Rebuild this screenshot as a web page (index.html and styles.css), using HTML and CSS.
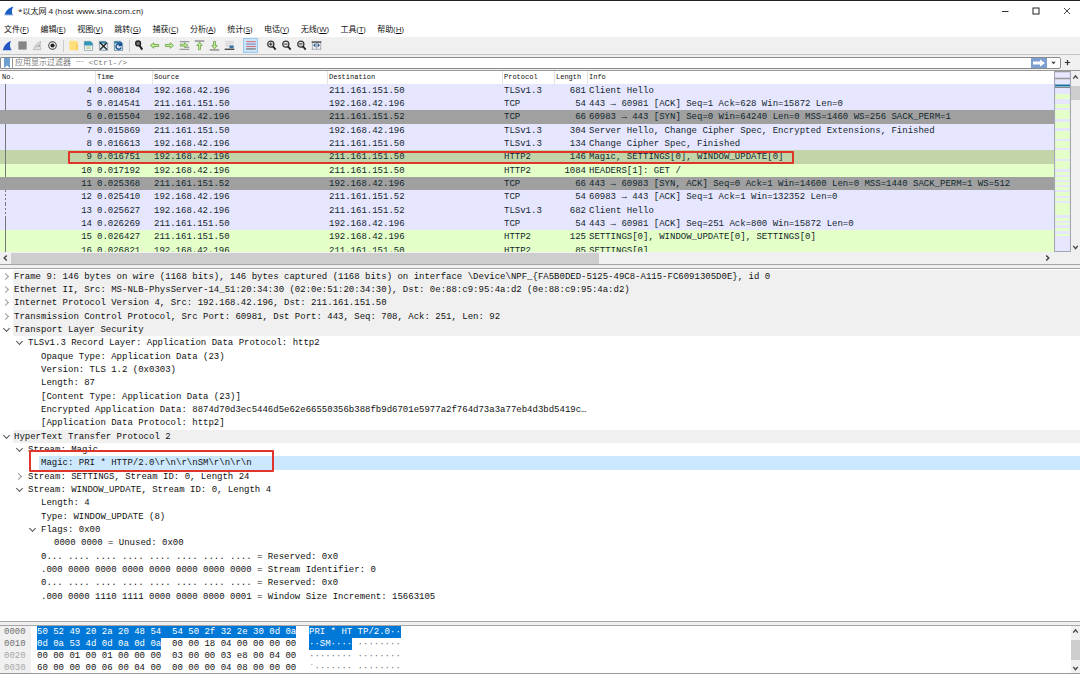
FILE: index.html
```html
<!DOCTYPE html>
<html lang="zh-CN">
<head>
<meta charset="utf-8">
<title>*以太网 4 (host www.sina.com.cn)</title>
<link rel="stylesheet" href="styles.css">
</head>
<body>
<header class="titlebar">
  <svg class="app-icon" viewBox="0 0 16 16"><path d="M1 14C3 7 8 2 15 1c-3 4-3 9-1 13z" fill="#1c5fc4"/><path d="M1 15h14v-1H1z" fill="#7fa6dd"/></svg>
  <h1 class="title">*以太网 4 (host www.sina.com.cn)</h1>
  <div class="window-buttons">
    <button class="win-btn" aria-label="最小化"><svg viewBox="0 0 8 8"><path d="M1 4.500h6.500" stroke="#333" fill="none"/></svg></button>
    <button class="win-btn" aria-label="最大化"><svg viewBox="0 0 8 8"><rect x="1" y="1" width="6" height="6" stroke="#222" fill="none"/></svg></button>
    <button class="win-btn" aria-label="关闭"><svg viewBox="0 0 8 8"><path d="M1 1l6 6M7 1L1 7" stroke="#333" stroke-width=".9" fill="none"/></svg></button>
  </div>
</header>
<nav class="menubar">
  <button>文件(<u>F</u>)</button><button>编辑(<u>E</u>)</button><button>视图(<u>V</u>)</button><button>跳转(<u>G</u>)</button><button>捕获(<u>C</u>)</button><button>分析(<u>A</u>)</button><button>统计(<u>S</u>)</button><button>电话(<u>Y</u>)</button><button>无线(<u>W</u>)</button><button>工具(<u>T</u>)</button><button>帮助(<u>H</u>)</button>
</nav>
<div class="toolbar">
  <button aria-label="开始捕获"><svg viewBox="0 0 16 16"><path d="M1 15C3 8 7 3 13 1c-2 5-2 9 1 14z" fill="#2257c5"/></svg></button>
  <button aria-label="停止捕获"><svg viewBox="0 0 16 16"><rect x="2" y="2" width="12" height="12" fill="#858585"/></svg></button>
  <button aria-label="重新开始"><svg viewBox="0 0 16 16"><path d="M2 14C4 8 7 4 13 2c-2 4-1 8 0 12z" fill="#e0e0e0" stroke="#aaa"/><path d="M6 11a3 3 0 0 1 5-2M11 6v3H8" stroke="#999" fill="none"/></svg></button>
  <button aria-label="捕获选项"><svg viewBox="0 0 16 16"><circle cx="8" cy="8" r="5.500" fill="none" stroke="#444" stroke-width="1.500"/><circle cx="8" cy="8" r="3" fill="#222"/></svg></button>
  <span class="sep"></span>
  <button aria-label="打开"><svg viewBox="0 0 16 16"><path d="M2 1h10l2 2v12H2z" fill="#ffdf7c"/><path d="M12 8v7h2V3z" fill="#f3c74f"/></svg></button>
  <button aria-label="保存"><svg viewBox="0 0 16 16"><path d="M2 2h9l3 3v10H2z" fill="#fff" stroke="#718697"/><path d="M2 2h9l3 3v3H2z" fill="#2f93b5"/><path d="M4 10h8M4 12h8" stroke="#8bac5c"/></svg></button>
  <button aria-label="关闭文件"><svg viewBox="0 0 16 16"><path d="M2 2h9l3 3v10H2z" fill="#dce8ef" stroke="#718697"/><path d="M2 2h9l3 3H2z" fill="#2f7fa5"/><path d="M3 4l10 10M13 4L3 14" stroke="#222" stroke-width="2"/></svg></button>
  <button aria-label="重新加载"><svg viewBox="0 0 16 16"><path d="M2 2h9l3 3v10H2z" fill="#dce8ef" stroke="#416b8b"/><path d="M2 2h9l3 3H2z" fill="#2f7fa5"/><path d="M11.500 7A4 4 0 1 0 12 11M12 4v4H8" stroke="#164f8e" stroke-width="2" fill="none"/></svg></button>
  <span class="sep"></span>
  <button aria-label="查找"><svg viewBox="0 0 16 16"><circle cx="6" cy="5" r="3.500" fill="#777" stroke="#222" stroke-width="2"/><path d="M8 8l4 6" stroke="#222" stroke-width="3"/></svg></button>
  <button aria-label="后退"><svg viewBox="0 0 16 16"><path d="M2 8l5-4v2.500h7v3H7V12z" fill="#c8f0a5" stroke="#6fa447" stroke-width="1.300"/></svg></button>
  <button aria-label="前进"><svg viewBox="0 0 16 16"><path d="M14 8L9 4v2.500H2v3h7V12z" fill="#c8f0a5" stroke="#6fa447" stroke-width="1.300"/></svg></button>
  <button aria-label="转到分组"><svg viewBox="0 0 16 16"><path d="M1 2.500h14M1 13.500h14M9 10.500h6" stroke="#555"/><path d="M2 6h6V4l5 3.500L8 11V9H2z" fill="#b9e895" stroke="#62983d"/></svg></button>
  <button aria-label="首个分组"><svg viewBox="0 0 16 16"><path d="M1 1.500h14" stroke="#666" stroke-width="1.500"/><path d="M8 3l4 5H9.500v6h-3V8H4z" fill="#b9e895" stroke="#62983d"/></svg></button>
  <button aria-label="最后分组"><svg viewBox="0 0 16 16"><path d="M1 14.500h14" stroke="#666" stroke-width="1.500"/><path d="M8 13L4 8h2.500V2h3v6H12z" fill="#b9e895" stroke="#62983d"/></svg></button>
  <button aria-label="自动滚动"><svg viewBox="0 0 16 16"><path d="M2 2.500h12M2 5.500h12M2 8.500h12" stroke="#bbb"/><path d="M1 13.500h14" stroke="#444" stroke-width="2"/><path d="M8 8h6v4H8z" fill="#3973a8"/></svg></button>
  <span class="sep plain"></span>
  <button class="active" aria-label="着色"><svg viewBox="0 0 16 16"><path d="M1 2.500h14" stroke="#d76565" stroke-width="1.400"/><path d="M1 6h14" stroke="#7676ac" stroke-width="1.400"/><path d="M1 9.500h14" stroke="#d76565" stroke-width="1.400"/><path d="M1 13h14" stroke="#555" stroke-width="1.400"/></svg></button>
  <span class="sep plain"></span>
  <button aria-label="放大"><svg viewBox="0 0 16 16"><circle cx="7" cy="6" r="4.500" fill="#eee" stroke="#333" stroke-width="1.800"/><path d="M10 9l4 5" stroke="#222" stroke-width="2.600"/><path d="M4.500 6h5M7 3.500v5" stroke="#222" stroke-width="1.400"/></svg></button>
  <button aria-label="缩小"><svg viewBox="0 0 16 16"><circle cx="7" cy="6" r="4.500" fill="#eee" stroke="#333" stroke-width="1.800"/><path d="M10 9l4 5" stroke="#222" stroke-width="2.600"/><path d="M4.500 6h5" stroke="#222" stroke-width="1.400"/></svg></button>
  <button aria-label="正常大小"><svg viewBox="0 0 16 16"><circle cx="7" cy="6" r="4.500" fill="#eee" stroke="#333" stroke-width="1.800"/><path d="M10 9l4 5" stroke="#222" stroke-width="2.600"/><path d="M4.500 5h5M4.500 7h5" stroke="#333"/></svg></button>
  <button aria-label="调整列宽"><svg viewBox="0 0 16 16"><path d="M1 13.500h14M8 2v12M2 2v12M14 2v12" stroke="#8c98a3"/><path d="M1 2h14v2H1z" fill="#444"/><path d="M6.500 4v7L3 7.500zM9.500 4v7L13 7.500z" fill="#315f96"/></svg></button>
</div>
<form class="filterbar">
  <div class="filterbox">
    <button type="button" class="bookmark" aria-label="书签"><svg viewBox="0 0 8 10"><path d="M1 0h6v10L4 7.500 1 10z" fill="#6f9fd0"/></svg></button>
    <input type="text" aria-label="应用显示过滤器" placeholder="应用显示过滤器 ⋯ &lt;Ctrl-/&gt;">
    <button type="button" class="apply" aria-label="应用"><svg viewBox="0 0 16 10"><path d="M2 3.500h7V1.500L14 5 9 8.500v-2H2z" fill="#fff"/></svg></button>
    <button type="button" class="drop" aria-label="历史"><svg viewBox="0 0 8 8"><path d="M1.500 3h5L4 6z" fill="#444"/></svg></button>
  </div>
  <button type="button" class="add" aria-label="添加"><svg viewBox="0 0 8 8"><path d="M1 4h6M4 1v6" stroke="#333" stroke-width="1.400"/></svg></button>
</form>
<main class="panes">
<section class="packets">
  <div class="list">
    <table>
      <colgroup><col class="c-no"><col class="c-time"><col class="c-addr"><col class="c-addr"><col class="c-proto"><col class="c-len"><col></colgroup>
      <thead><tr><th>No.</th><th>Time</th><th>Source</th><th>Destination</th><th>Protocol</th><th>Length</th><th>Info</th></tr></thead>
      <tbody>
      <tr class="tcp"><td>4</td><td>0.008184</td><td>192.168.42.196</td><td>211.161.151.50</td><td>TLSv1.3</td><td>681</td><td>Client Hello</td></tr>
      <tr class="tcp"><td>5</td><td>0.014541</td><td>211.161.151.50</td><td>192.168.42.196</td><td>TCP</td><td>54</td><td>443 → 60981 [ACK] Seq=1 Ack=628 Win=15872 Len=0</td></tr>
      <tr class="syn"><td>6</td><td>0.015504</td><td>192.168.42.196</td><td>211.161.151.52</td><td>TCP</td><td>66</td><td>60983 → 443 [SYN] Seq=0 Win=64240 Len=0 MSS=1460 WS=256 SACK_PERM=1</td></tr>
      <tr class="tcp"><td>7</td><td>0.015869</td><td>211.161.151.50</td><td>192.168.42.196</td><td>TLSv1.3</td><td>304</td><td>Server Hello, Change Cipher Spec, Encrypted Extensions, Finished</td></tr>
      <tr class="tcp"><td>8</td><td>0.016613</td><td>192.168.42.196</td><td>211.161.151.50</td><td>TLSv1.3</td><td>134</td><td>Change Cipher Spec, Finished</td></tr>
      <tr class="http current"><td>9</td><td>0.016751</td><td>192.168.42.196</td><td>211.161.151.50</td><td>HTTP2</td><td>146</td><td>Magic, SETTINGS[0], WINDOW_UPDATE[0]</td></tr>
      <tr class="http"><td>10</td><td>0.017192</td><td>192.168.42.196</td><td>211.161.151.50</td><td>HTTP2</td><td>1084</td><td>HEADERS[1]: GET /</td></tr>
      <tr class="syn"><td>11</td><td>0.025368</td><td>211.161.151.52</td><td>192.168.42.196</td><td>TCP</td><td>66</td><td>443 → 60983 [SYN, ACK] Seq=0 Ack=1 Win=14600 Len=0 MSS=1440 SACK_PERM=1 WS=512</td></tr>
      <tr class="tcp other"><td>12</td><td>0.025410</td><td>192.168.42.196</td><td>211.161.151.52</td><td>TCP</td><td>54</td><td>60983 → 443 [ACK] Seq=1 Ack=1 Win=132352 Len=0</td></tr>
      <tr class="tcp other"><td>13</td><td>0.025627</td><td>192.168.42.196</td><td>211.161.151.52</td><td>TLSv1.3</td><td>682</td><td>Client Hello</td></tr>
      <tr class="tcp"><td>14</td><td>0.026269</td><td>211.161.151.50</td><td>192.168.42.196</td><td>TCP</td><td>54</td><td>443 → 60981 [ACK] Seq=251 Ack=800 Win=15872 Len=0</td></tr>
      <tr class="http"><td>15</td><td>0.026427</td><td>211.161.151.50</td><td>192.168.42.196</td><td>HTTP2</td><td>125</td><td>SETTINGS[0], WINDOW_UPDATE[0], SETTINGS[0]</td></tr>
      <tr class="http"><td>16</td><td>0.026821</td><td>192.168.42.196</td><td>211.161.151.50</td><td>HTTP2</td><td>85</td><td>SETTINGS[0]</td></tr>
      </tbody>
    </table>
  </div>
  <svg class="minimap" viewBox="0 0 16 181" preserveAspectRatio="none">
    <rect width="16" height="181" fill="#e7e6ff"/>
    <path d="M0 .5h16M0 7.500h16" stroke="#999" stroke-width="1.300"/>
    <path d="M0 14.500h16" stroke="#16779c" stroke-width="2"/><path d="M0 16.500h16" stroke="#888"/>
    <path d="M0 23h16v5H0zM0 33h16v4H0zM0 39h16v9H0zM0 51h16v6H0zM0 60h16v8H0zM0 70h16v7H0zM0 79h16v9H0zM0 90h16v8H0zM0 101h16v3H0zM0 106h16v3H0zM0 111h16v3H0zM0 116h16v3H0zM0 121h16v4H0zM0 127h16v3H0zM0 132h16v12H0zM0 147h16v3H0zM0 152h16v2H0zM0 157h16v3H0zM0 163h16v2H0z" fill="#e4ffc7"/>
    <path d="M.5 0v181M15.500 0v181M0 180.500h16" stroke="#a5a5b5" fill="none"/>
  </svg>
  <div class="vscroll"><svg viewBox="0 0 8 8"><path d="M2 5.500l2-2.500 2 2.500" class="arrow"/></svg><span class="thumb"></span><svg viewBox="0 0 8 8"><path d="M2 3l2 2.500L6 3" class="arrow"/></svg></div>
  <div class="mark mark-packet"></div>
</section>
<div class="hscroll"><svg viewBox="0 0 8 8"><path d="M5 2L3 4l2 2" class="arrow"/></svg><div class="track"><span class="thumb"></span></div><svg viewBox="0 0 8 8"><path d="M3 2l2 2-2 2" class="arrow"/></svg></div>
<div class="splitter"></div>
<section class="details">
  <ul class="tree">
    <li class="l0 closed">Frame 9: 146 bytes on wire (1168 bits), 146 bytes captured (1168 bits) on interface \Device\NPF_{FA5B0DED-5125-49C8-A115-FC6091305D0E}, id 0</li>
    <li class="l0 closed">Ethernet II, Src: MS-NLB-PhysServer-14_51:20:34:30 (02:0e:51:20:34:30), Dst: 0e:88:c9:95:4a:d2 (0e:88:c9:95:4a:d2)</li>
    <li class="l0 closed">Internet Protocol Version 4, Src: 192.168.42.196, Dst: 211.161.151.50</li>
    <li class="l0 closed">Transmission Control Protocol, Src Port: 60981, Dst Port: 443, Seq: 708, Ack: 251, Len: 92</li>
    <li class="l0 open">Transport Layer Security</li>
    <li class="l1 open">TLSv1.3 Record Layer: Application Data Protocol: http2</li>
    <li class="l2">Opaque Type: Application Data (23)</li>
    <li class="l2">Version: TLS 1.2 (0x0303)</li>
    <li class="l2">Length: 87</li>
    <li class="l2">[Content Type: Application Data (23)]</li>
    <li class="l2">Encrypted Application Data: 8874d70d3ec5446d5e62e66550356b388fb9d6701e5977a2f764d73a3a77eb4d3bd5419c…</li>
    <li class="l2">[Application Data Protocol: http2]</li>
    <li class="l0 open">HyperText Transfer Protocol 2</li>
    <li class="l1 open">Stream: Magic</li>
    <li class="l2 picked">Magic: PRI * HTTP/2.0\r\n\r\nSM\r\n\r\n</li>
    <li class="l1 closed">Stream: SETTINGS, Stream ID: 0, Length 24</li>
    <li class="l1 open">Stream: WINDOW_UPDATE, Stream ID: 0, Length 4</li>
    <li class="l2">Length: 4</li>
    <li class="l2">Type: WINDOW_UPDATE (8)</li>
    <li class="l2 open">Flags: 0x00</li>
    <li class="l3">0000 0000 = Unused: 0x00</li>
    <li class="l2">0... .... .... .... .... .... .... .... = Reserved: 0x0</li>
    <li class="l2">.000 0000 0000 0000 0000 0000 0000 0000 = Stream Identifier: 0</li>
    <li class="l2">0... .... .... .... .... .... .... .... = Reserved: 0x0</li>
    <li class="l2">.000 0000 1110 1111 0000 0000 0000 0001 = Window Size Increment: 15663105</li>
  </ul>
  <div class="mark mark-detail"></div>
</section>
<div class="splitter"></div>
<section class="bytes">
<pre class="offsets">0000
0010
<span class="faint">0020
0030</span></pre>
<pre class="hex"><mark>50 52 49 20 2a 20 48 54  54 50 2f 32 2e 30 0d 0a</mark>
<mark>0d 0a 53 4d 0d 0a 0d 0a</mark><span>  00 00 18 04 00 00 00 00</span>
<span>00 00 01 00 01 00 00 00  03 00 00 03 e8 00 04 00</span>
<span>60 00 00 00 06 00 04 00  00 00 00 04 08 00 00 00</span></pre>
<pre class="ascii"><mark>PRI * HT TP/2.0··</mark>
<mark>··SM····</mark><span> ········</span>
<span>········ ········</span>
<span>`······· ········</span></pre>
<div class="vscroll"><svg viewBox="0 0 8 8"><path d="M2 5.500l2-2.500 2 2.500" class="arrow"/></svg><span class="thumb"></span><svg viewBox="0 0 8 8"><path d="M2 3l2 2.500L6 3" class="arrow"/></svg></div>
</section>
</main>
</body>
</html>
```

FILE: styles.css
```css
* { box-sizing: border-box; }
body {
  margin: 0;
  height: 100vh;
  display: flex;
  flex-direction: column;
  overflow: hidden;
  background: #fff;
  color: #111;
  font: 8px/12px "Open Sans", "Noto Sans CJK SC", sans-serif;
}
button { border: 0; padding: 0; margin: 0; background: none; font: inherit; color: inherit; }
svg { display: block; }
.arrow { fill: none; stroke: #444; stroke-width: 1.2; }

.titlebar {
  display: flex;
  align-items: center;
  height: 21px;
  padding-left: 4px;
  border-top: 1px solid #222;
}
.app-icon { width: 10px; height: 10px; }
.title { flex: 1; margin: 0 0 0 4px; font-size: 8px; font-weight: 400; }
.window-buttons { display: flex; gap: 5px; }
.win-btn { width: 26px; display: flex; justify-content: center; }
.win-btn svg { width: 8px; height: 8px; }

.menubar {
  display: flex;
  justify-content: space-between;
  max-width: 408px;
  height: 16px;
  padding: 2px 4px;
}
.menubar button { line-height: 12px; white-space: nowrap; }

.toolbar { display: flex; align-items: center; height: 17px; background: #f0f0f0; }
.toolbar button { width: 15px; height: 15px; display: flex; align-items: center; justify-content: center; }
.toolbar svg { width: 11px; height: 11px; }
.toolbar .active { background: #cce4f7; border: 1px solid #99c9ef; }
.toolbar .active svg { width: 12px; }
.sep { width: 6px; height: 12px; background: linear-gradient(#ccc, #ccc) center / 1px 100% no-repeat; }
.sep.plain { background: none; }

.filterbar {
  display: flex;
  align-items: center;
  height: 17px;
  background: #f0f0f0;
  border-top: 1px solid #c4c4c4;
  border-bottom: 1px solid #999;
}
.filterbox {
  flex: 1;
  display: flex;
  align-items: center;
  height: 12px;
  background: #fff;
  border: 1px solid #8a8a8a;
  border-radius: 1px 2px 2px 1px;
}
.bookmark { width: 12px; border-right: 1px solid #999; display: flex; justify-content: center; }
.bookmark svg { width: 8px; height: 10px; }
.filterbox input {
  flex: 1;
  min-width: 0;
  height: 10px;
  padding: 0 2px;
  border: 0;
  outline: 0;
  background: none;
  font: 8px/10px "Liberation Mono", "Noto Sans CJK SC", monospace;
}
.filterbox input::placeholder { color: #777; }
.apply { width: 16px; background: #7d9fd1; }
.apply svg { width: 16px; height: 10px; }
.drop { width: 13px; display: flex; justify-content: center; }
.drop svg { width: 7px; height: 7px; }
.add { width: 19px; padding-right: 6px; display: flex; justify-content: center; }
.add svg { width: 7px; height: 7px; }

.panes {
  flex: 1;
  min-height: 0;
  display: flex;
  flex-direction: column;
  font: 9px/13px "Liberation Mono", monospace;
}
.packets { position: relative; display: flex; height: 181px; overflow: hidden; }
.list { flex: 1; min-width: 0; overflow: hidden; }
table { width: 100%; table-layout: fixed; border-collapse: collapse; color: #12272e; }
.c-no { width: 95px; }
.c-time { width: 57px; }
.c-addr { width: 175px; }
.c-proto { width: 52px; }
.c-len { width: 33px; }
th, td { padding: 0 2px; text-align: left; white-space: nowrap; }
th { height: 13px; line-height: 13px; font-size: 7px; font-weight: 400; color: #111; box-shadow: 1px 0 #e2e2e2; }
td { padding-top: 2px; line-height: 11px; vertical-align: top; }
tbody tr { height: 13px; }
tbody tr:nth-child(3n) { height: 14px; }
td:nth-child(6) { text-align: right; padding-right: 1px; }
td:first-child {
  text-align: right;
  padding-right: 3px;
  background: linear-gradient(#777, #777) 5px 0 / 1px 100% no-repeat;
}
.syn td:first-child { background: none; }
.other td:first-child {
  background: repeating-linear-gradient(#777 0 2px, transparent 2px 4px) 5px 0 / 1px 100% no-repeat;
}
.tcp { background: #e7e6ff; }
.http { background: #e4ffc7; }
.syn { background: #a0a0a0; }
.current { background: #c2d5a9; }

.minimap { width: 17px; height: 100%; }
.vscroll { width: 9px; background: #f0f0f0; display: flex; flex-direction: column; justify-content: space-between; }
.vscroll svg { width: 9px; height: 10px; }
.vscroll .thumb { height: 14px; background: #cdcdcd; }
.packets .vscroll { padding-top: 1px; }
.packets .vscroll .thumb { margin: 4px 0 auto; }
.mark { position: absolute; border: 2px solid #e0352b; border-radius: 1px; }
.mark-packet { left: 68px; top: 80px; width: 726px; height: 13px; }

.hscroll { display: flex; align-items: center; height: 12px; padding-right: 27px; background: #f0f0f0; }
.hscroll svg { width: 11px; height: 10px; }
.hscroll .track { flex: 1; height: 100%; padding-top: 1px; display: flex; }
.hscroll .thumb { width: 57%; background: #cdcdcd; }

.splitter { flex: none; height: 5px; background: #f0f0f0; border: solid #a5a5a5; border-width: 1px 0; }

.details { position: relative; flex: 1; min-height: 0; overflow: hidden; padding-top: 1px; }
.tree { margin: 0; padding: 0; list-style: none; line-height: 11px; }
.tree li { position: relative; height: 13px; padding-top: 2px; white-space: pre; }
.tree li:nth-child(3n) { height: 14px; }
.tree .l0 { margin-left: 13px; padding-left: 1px; background: #f0f0f0; }
.tree .l1 { margin-left: 26px; padding-left: 2px; }
.tree .l2 { margin-left: 39px; padding-left: 2px; }
.tree .l3 { margin-left: 52px; padding-left: 2px; }
.tree .picked { background: #cce8ff; }
.open::before, .closed::before {
  content: "";
  position: absolute;
  left: -9px;
  top: 4px;
  width: 4px;
  height: 4px;
  border: solid #555;
  border-width: 0 1px 1px 0;
}
.open::before { transform: translateY(-1px) rotate(45deg); }
.closed::before { border-color: #999; transform: translateX(-1px) rotate(-45deg); }
.mark-detail { left: 29px; top: 181px; width: 245px; height: 22px; }

.bytes { display: flex; height: 48px; overflow: hidden; border-bottom: 1px solid #999; line-height: 12px; }
pre { margin: 0; font: inherit; }
.offsets { width: 31px; padding-left: 4px; background: #f0f0f0; color: #707070; }
.faint { color: #a8a8a8; }
.hex { width: 278px; padding-left: 6px; }
.ascii { flex: 1; color: #777; }
mark { display: inline-block; height: 12px; background: #0078d7; color: #fff; vertical-align: top; }
.bytes .vscroll .thumb { height: 20px; }
```
